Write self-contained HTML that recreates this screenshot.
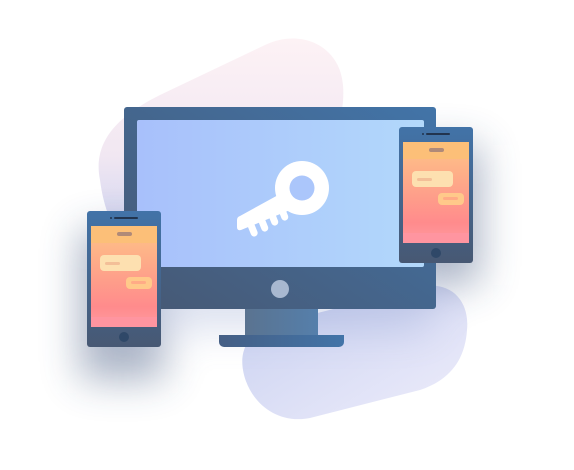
<!DOCTYPE html>
<html><head><style>
html,body{margin:0;padding:0;width:574px;height:470px;background:#fff;overflow:hidden}
svg{display:block}
</style></head><body>
<svg width="574" height="470" viewBox="0 0 574 470" xmlns="http://www.w3.org/2000/svg">
<defs>
<filter id="blur" x="-80%" y="-80%" width="260%" height="260%"><feGaussianBlur stdDeviation="20"/></filter>
<linearGradient id="scr" x1="0" y1="0" x2="1" y2="0"><stop offset="0" stop-color="#a8c0fb"/><stop offset="1" stop-color="#b2d8fb"/></linearGradient>
<linearGradient id="frame" x1="0" y1="1" x2="1" y2="0"><stop offset="0" stop-color="#475873"/><stop offset="1" stop-color="#4274a8"/></linearGradient>
<linearGradient id="neck" x1="0" y1="0" x2="1" y2="0"><stop offset="0" stop-color="#5a7390"/><stop offset="1" stop-color="#557fab"/></linearGradient>
<linearGradient id="base" x1="0" y1="0" x2="1" y2="0"><stop offset="0" stop-color="#455f85"/><stop offset="1" stop-color="#4274a8"/></linearGradient>
<linearGradient id="ph" x1="0" y1="0" x2="0" y2="1"><stop offset="0" stop-color="#fdc586"/><stop offset="0.8" stop-color="#ff8b8c"/><stop offset="1" stop-color="#ff9aa0"/></linearGradient>
<linearGradient id="pframe" x1="0" y1="0" x2="0" y2="1"><stop offset="0" stop-color="#4273a8"/><stop offset="1" stop-color="#475873"/></linearGradient>
<linearGradient id="pink" x1="0" y1="0" x2="0" y2="1"><stop offset="0" stop-color="#fdf2f5"/><stop offset="0.55" stop-color="#f1e7f2"/><stop offset="1" stop-color="#c8d0f0"/></linearGradient>
<linearGradient id="lav" x1="0" y1="0" x2="1" y2="1"><stop offset="0" stop-color="#c8d0f0"/><stop offset="1" stop-color="#eeedfb"/></linearGradient>
<g id="phone">
<rect x="0" y="0" width="74" height="136" rx="3" fill="url(#pframe)"/>
<rect x="4" y="15" width="66" height="101" fill="url(#ph)"/>
<rect x="4" y="15" width="66" height="17" fill="#fcbf78"/>
<rect x="4" y="106" width="66" height="10" fill="#ff95a0"/>
<rect x="30" y="21" width="15" height="4" rx="2" fill="#b08a78"/>
<circle cx="24" cy="7" r="1" fill="#22344e"/>
<rect x="27" y="6" width="24" height="2" rx="1" fill="#22344e"/>
<rect x="13" y="44" width="41" height="16" rx="4" fill="#fde0b0"/>
<rect x="18" y="51" width="15" height="3" rx="1.5" fill="#f3bf98"/>
<rect x="39" y="66" width="26" height="12" rx="4" fill="#ffc98a"/>
<rect x="44" y="70" width="15" height="3" rx="1.5" fill="#ffab86"/>
<circle cx="37" cy="126" r="5" fill="#2f4868"/>
</g>
</defs>
<path d="M100 180 C92 140 120 115 160 95 L265 45 C300 28 340 45 343 85 C345 110 338 135 320 150 L150 250 C125 262 105 220 100 180Z" fill="url(#pink)"/>
<path d="M243 370 C238 340 260 325 290 320 L420 287 C450 280 470 300 467 330 C465 360 450 380 420 390 L310 418 C275 425 248 400 243 370Z" fill="url(#lav)"/>
<g filter="url(#blur)" opacity="0.4">
<rect x="80" y="230" width="85" height="150" fill="#2b4270"/>
<rect x="400" y="145" width="80" height="140" fill="#2b4270"/>
<rect x="130" y="270" width="300" height="60" fill="#6f86c0" opacity="0.6"/>
</g>
<rect x="124" y="107" width="312" height="202" rx="3" fill="url(#frame)"/>
<rect x="137" y="120" width="287" height="147" rx="2" fill="url(#scr)"/>
<circle cx="280" cy="289" r="9" fill="#a8b8d0"/>
<rect x="245" y="309" width="73" height="26" fill="url(#neck)"/>
<path d="M219 335 H344 V342 a5 5 0 0 1 -5 5 H224 a5 5 0 0 1 -5 -5Z" fill="url(#base)"/>
<g fill="#fff">
<circle cx="302" cy="188" r="27"/>
<path d="M280 194 L290 210 L241 230 Q237 231 237 227 L237 220 Q237 217 240 216Z"/>
<rect x="249" y="222" width="7" height="15" rx="3.5" transform="rotate(-22 252 229)"/>
<rect x="260" y="218" width="7" height="14" rx="3.5" transform="rotate(-22 263 225)"/>
<rect x="270" y="213" width="7" height="13" rx="3.5" transform="rotate(-22 273 219)"/>
<rect x="280" y="208" width="7" height="13" rx="3.5" transform="rotate(-22 283 214)"/>
</g>
<circle cx="302" cy="188" r="12.5" fill="#abc6fb"/>
<use href="#phone" x="87" y="211"/>
<use href="#phone" x="399" y="127"/>
</svg>
</body></html>
